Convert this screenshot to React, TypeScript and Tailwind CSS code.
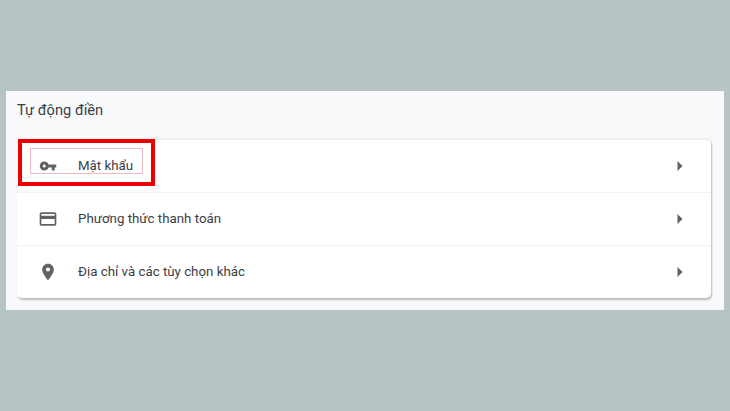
export default function App() {
  const rows = [
    {
      label: "Mật khẩu",
      icon: (
        <svg width="18" height="18" viewBox="0 0 24 24" fill="#5f6368">
          <path d="M12.65 10A5.99 5.99 0 0 0 7 6c-3.31 0-6 2.69-6 6s2.69 6 6 6a5.99 5.99 0 0 0 5.65-4H17v4h4v-4h2v-4H12.65zM7 14c-1.1 0-2-.9-2-2s.9-2 2-2 2 .9 2 2-.9 2-2 2z" />
        </svg>
      ),
    },
    {
      label: "Phương thức thanh toán",
      icon: (
        <svg width="20" height="20" viewBox="0 0 24 24" fill="#5f6368">
          <path d="M20 4H4c-1.11 0-1.99.89-1.99 2L2 18c0 1.11.89 2 2 2h16c1.11 0 2-.89 2-2V6c0-1.11-.89-2-2-2zm0 14H4v-6h16v6zm0-10H4V6h16v2z" />
        </svg>
      ),
    },
    {
      label: "Địa chỉ và các tùy chọn khác",
      icon: (
        <svg width="20" height="20" viewBox="0 0 24 24" fill="#5f6368">
          <path d="M12 2C8.13 2 5 5.13 5 9c0 5.25 7 13 7 13s7-7.75 7-13c0-3.87-3.13-7-7-7zm0 9.5a2.5 2.5 0 0 1 0-5 2.5 2.5 0 0 1 0 5z" />
        </svg>
      ),
    },
  ];
  return (
    <div className="w-[730px] h-[411px] bg-[#b7c4c5] pt-[91px] pl-[6px] font-['Roboto',sans-serif] overflow-hidden">
      <div className="relative w-[718px] h-[219px] bg-[#f8f9fb] px-[11px] pt-[9px]">
        <div className="text-[14.7px] leading-[20px] text-[#3c4043]">Tự động điền</div>
        <div className="mt-[18px] w-[694px] h-[160px] bg-white rounded-[5px] border-t-2 border-t-[#eff0f2] shadow-[1px_2px_2px_rgba(0,0,0,0.25)] flex flex-col">
          {rows.map((r, i) => (
            <div
              key={r.label}
              className={`flex-1 flex items-center pl-[20px] pr-[28px] ${i > 0 ? "border-t border-[#f0f1f2]" : ""}`}
            >
              <div className="w-[22px] flex justify-center">{r.icon}</div>
              <div className="ml-[19px] flex-1 text-[13.3px] text-[#3c4043]">{r.label}</div>
              <svg width="6" height="10" viewBox="0 0 6 10" fill="#5f6368">
                <path d="M0.5 0 L5.5 5 L0.5 10 Z" />
              </svg>
            </div>
          ))}
        </div>
        <div className="absolute left-[24px] top-[57px] w-[113px] h-[26px] border border-[#eeb9bf]" />
        <div className="absolute left-[12px] top-[48px] w-[137px] h-[47px] border-[4px] border-[#ee0000]" />
      </div>
    </div>
  );
}
